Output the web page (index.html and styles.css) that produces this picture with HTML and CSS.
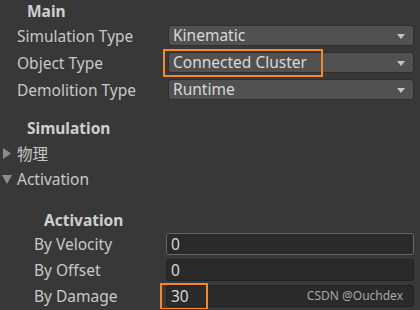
FILE: index.html
```html
<!DOCTYPE html>
<html lang="en">
<head>
    <meta charset="UTF-8">
    <title>Inspector</title>
    <link rel="stylesheet" href="styles.css">
</head>
<body>

<div class="inspector">
    <div class="heading">Main</div>
    <div class="row">
        <span class="label">Simulation Type</span>
        <div class="dropdown">Kinematic<span class="arrow"></span></div>
    </div>
    <div class="row">
        <span class="label">Object Type</span>
        <div class="dropdown">Connected Cluster<span class="arrow"></span>
            <div class="mark mark-wide"></div>
        </div>
    </div>
    <div class="row">
        <span class="label">Demolition Type</span>
        <div class="dropdown">Runtime<span class="arrow"></span></div>
    </div>

    <div class="heading heading-gap">Simulation</div>
    <div class="foldout">
        <svg class="fold-icon" width="10" height="11" viewBox="0 0 10 11"><path d="M1 0 L9 5.5 L1 11 Z" fill="#8c8c8c"/></svg>
        <span>物理</span>
    </div>
    <div class="foldout">
        <svg class="fold-icon" width="10" height="10" viewBox="0 0 10 10"><path d="M0 1 L10 1 L5 10 Z" fill="#8c8c8c"/></svg>
        <span>Activation</span>
    </div>

    <div class="sub">
        <div class="heading">Activation</div>
        <div class="row row-input">
            <span class="label">By Velocity</span>
            <div class="input input-focus">0</div>
        </div>
        <div class="row row-input">
            <span class="label">By Offset</span>
            <div class="input">0</div>
        </div>
        <div class="row row-input">
            <span class="label">By Damage</span>
            <div class="input">30
                <div class="mark mark-small"></div>
                <span class="watermark">CSDN @Ouchdex</span>
            </div>
        </div>
    </div>
</div>

</body>
</html>
```
FILE: styles.css
```css
body {
    margin: 0;
    padding: 0;
    background-color: #383838;
    font-family: "Noto Sans", "Noto Sans CJK SC", sans-serif;
    font-size: 15.5px;
    color: #c8c8c8;
}
.inspector {
    padding: 1px 6px 0 0;
}
.heading {
    font-weight: bold;
    padding-left: 27px;
    height: 21px;
    line-height: 20px;
    color: #cfcfcf;
}
.heading-gap {
    margin-top: 15px;
    height: 22px;
}
.row {
    display: flex;
    align-items: center;
    height: 27px;
    padding-left: 17px;
}
.label {
    width: 151px;
    flex-shrink: 0;
}
.dropdown {
    position: relative;
    flex: 1;
    height: 19px;
    line-height: 19px;
    padding-left: 4px;
    background-color: #515151;
    border: 1px solid #2f2f2f;
    border-radius: 3px;
    color: #d8d8d8;
}
.arrow {
    position: absolute;
    right: 8px;
    top: 8px;
    border-left: 4.5px solid transparent;
    border-right: 4.5px solid transparent;
    border-top: 5px solid #c4c4c4;
}
.mark {
    position: absolute;
    border: 2px solid #f5872d;
}
.mark-wide {
    left: -6px;
    top: -4px;
    width: 156px;
    height: 24px;
}
.mark-small {
    left: -7px;
    top: -3px;
    width: 44px;
    height: 23px;
}
.foldout {
    display: flex;
    align-items: center;
    height: 26px;
    padding-left: 2px;
}
.fold-icon {
    margin-right: 5px;
}
.sub {
    margin-top: 18px;
    padding-left: 17px;
}
.sub .label {
    width: 132px;
}
.row-input {
    height: 26px;
}
.input {
    position: relative;
    flex: 1;
    height: 20px;
    line-height: 20px;
    padding-left: 4px;
    background-color: #2a2a2a;
    border: 1px solid #212121;
    border-radius: 3px;
    color: #d8d8d8;
}
.input-focus {
    border-color: #666666;
}
.watermark {
    position: absolute;
    right: 10px;
    top: 0;
    font-size: 12px;
    color: #a8a8a8;
}
```
